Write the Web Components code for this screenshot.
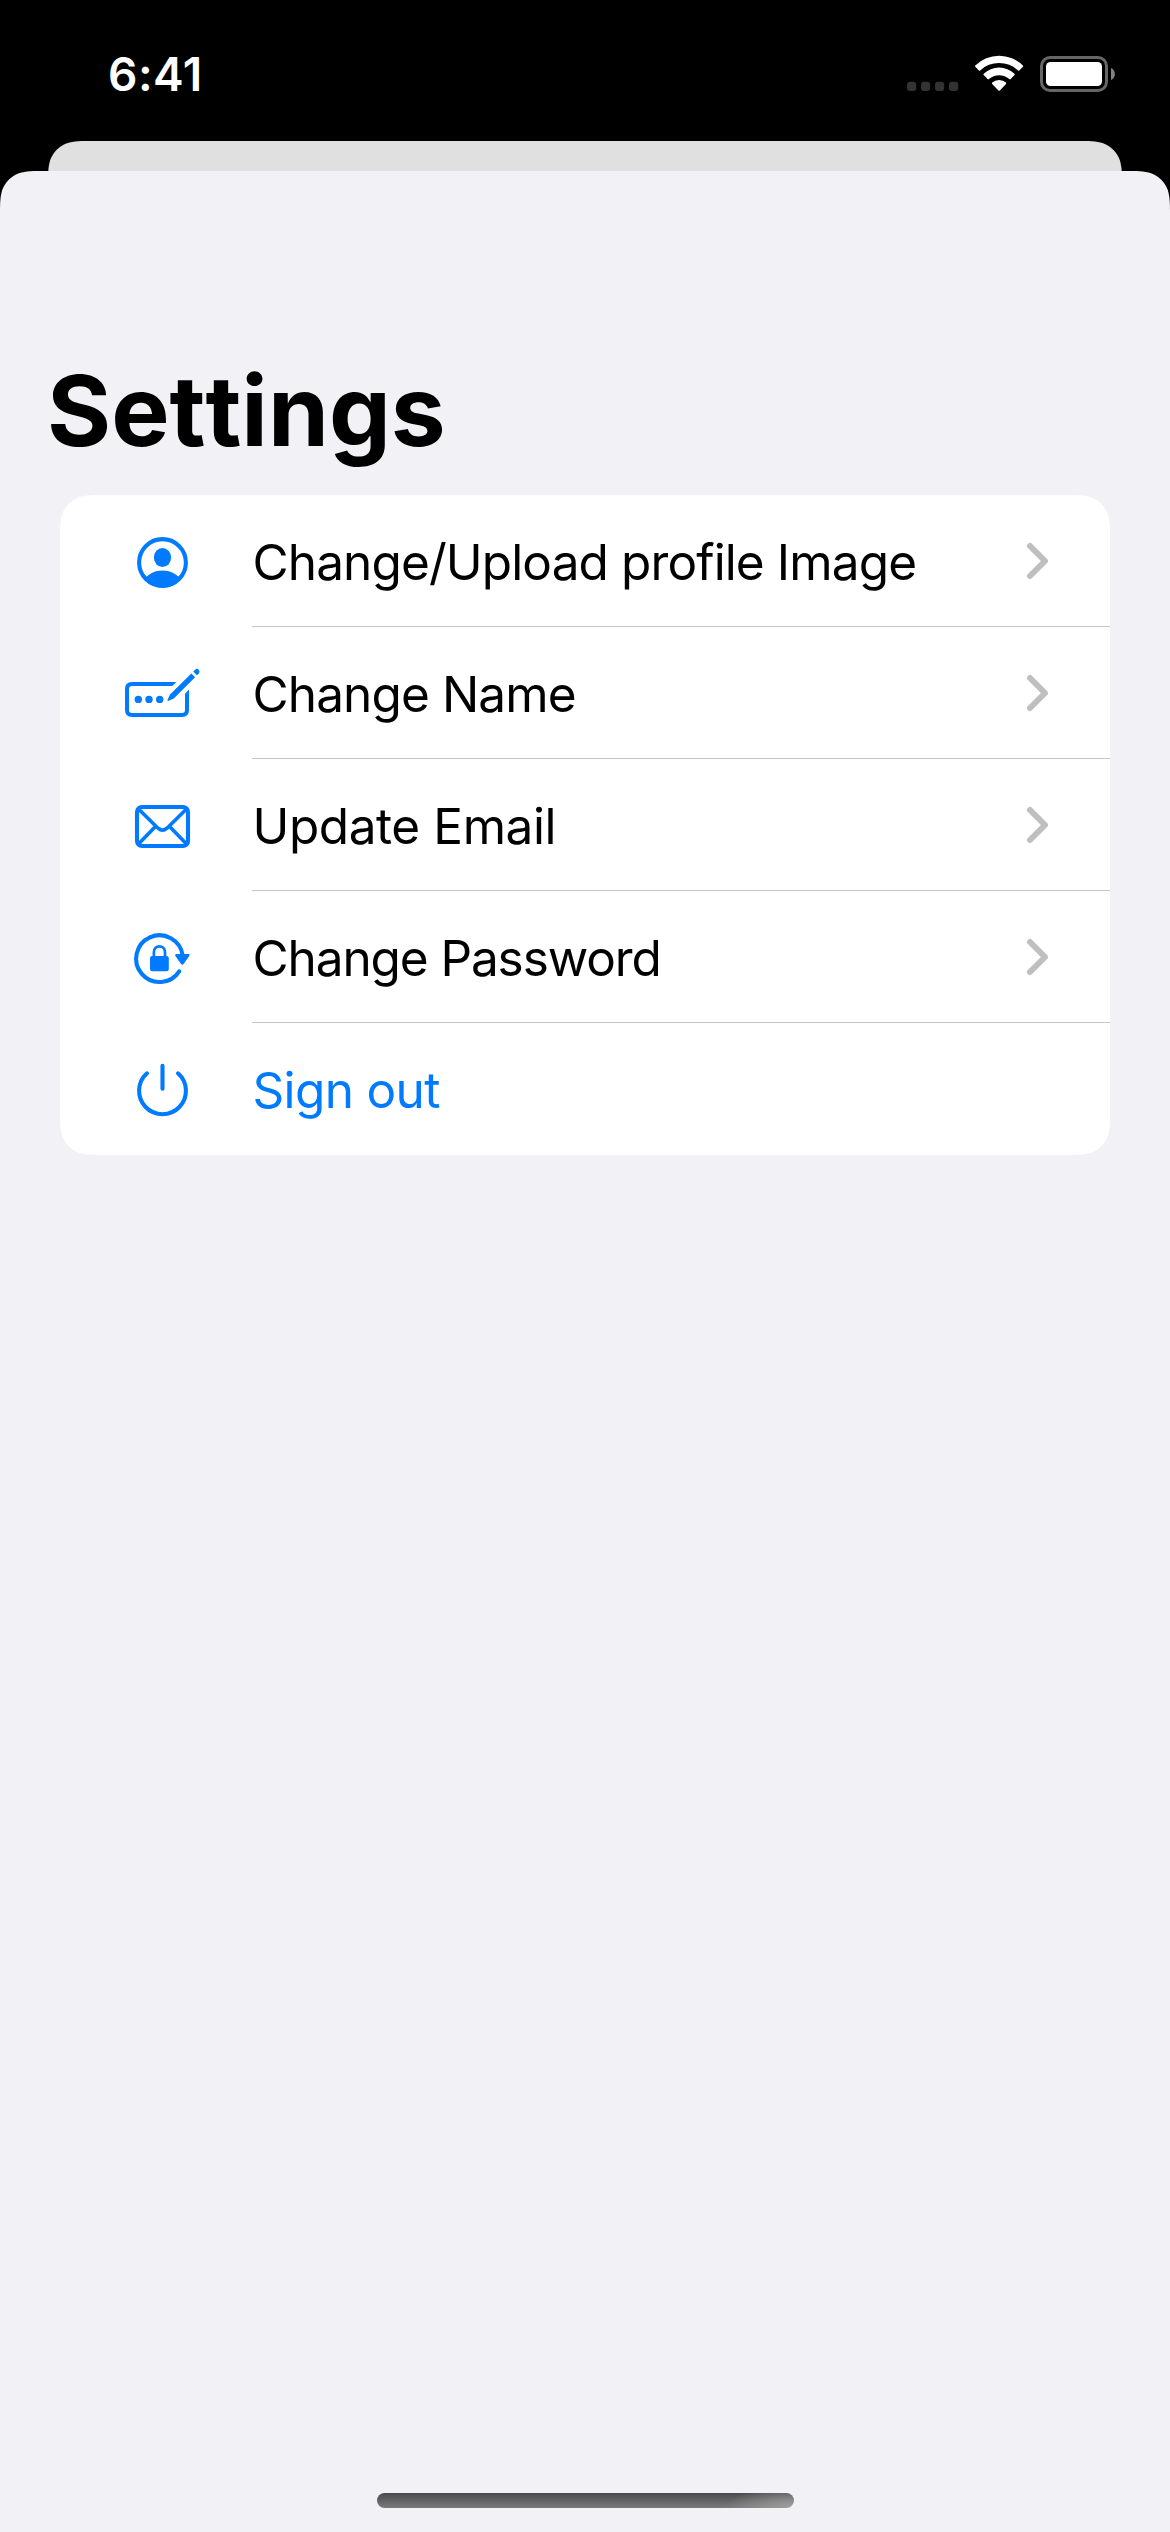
<!DOCTYPE html>
<html lang="en">
<head>
<meta charset="utf-8">
<title>Settings</title>
<style>
html,body{margin:0;padding:0;background:#000}
body{width:1170px;height:2532px;overflow:hidden;font-family:Inter,"Liberation Sans",sans-serif}
</style>
</head>
<body>
<settings-screen></settings-screen>
<script>
const define=(name,html)=>customElements.define(name,class extends HTMLElement{
  constructor(){super();this.attachShadow({mode:'open'}).innerHTML=html;}
});

define('status-bar',`<style>
:host{display:flex;justify-content:space-between;align-items:flex-start;height:141px;box-sizing:border-box;padding:45px 54px 0 108px;color:#fff}
.time{font-weight:600;font-size:46px;line-height:58px;letter-spacing:.5px}
svg{display:block;height:60px;width:216px}
</style>
<span class="time"><slot></slot></span>
<svg viewBox="900 45 216 60" fill="#fff">
<g fill="#333"><rect x="907" y="81.8" width="9.2" height="9.2" rx="3"/><rect x="921" y="81.8" width="9.2" height="9.2" rx="3"/><rect x="935" y="81.8" width="9.2" height="9.2" rx="3"/><rect x="949" y="81.8" width="9.2" height="9.2" rx="3"/></g>
<path d="M975.3 65.4A34 34 0 0 1 1022.9 65.4Q1023.5 66 1022.9 66.7L1019.3 70.4Q1018.7 71 1018 70.4A27.6 27.6 0 0 0 980.2 70.4Q979.5 71 978.9 70.4L975.3 66.7Q974.7 66 975.3 65.4Z"/>
<path d="M983.7 73.8A22 22 0 0 1 1014.5 73.8Q1015.1 74.4 1014.5 75.1L1010.7 79Q1010 79.7 1009.3 79.1A15.4 15.4 0 0 0 988.9 79.1Q988.2 79.7 987.5 79L983.7 75.1Q983.1 74.4 983.7 73.8Z"/>
<path d="M992.2 82.5A10.4 10.4 0 0 1 1006 82.5Q1006.6 83.2 1006 83.9L999.8 90.4Q999.1 91.2 998.4 90.4L992.2 83.9Q991.6 83.2 992.2 82.5Z"/>
<rect x="1041.5" y="57.5" width="65" height="33" rx="8.5" fill="none" stroke="#666" stroke-width="3"/>
<rect x="1046" y="62" width="56" height="24" rx="4.5"/>
<path d="M1111 68A6.6 6.6 0 0 1 1111 80Z" fill="#808080"/>
</svg>`);

const corner='M0 3000V45.9C0 32.7 0 26.1 2.2 18.9C5.1 11.2 11.2 5.1 18.9 2.2C26.1 0 32.7 0 45.9 0';
define('modal-sheet',`<style>
:host{display:flex;flex-direction:column;height:2391px}
.back{height:30px;margin:0 48px;background:#e0e0e0;clip-path:path('${corner}H1028.1C1041.3 0 1047.9 0 1055.1 2.2C1062.8 5.1 1068.9 11.2 1071.8 18.9C1074 26.1 1074 32.7 1074 45.9V3000Z')}
.front{flex:1;box-sizing:border-box;background:#f2f1f6;display:flex;flex-direction:column;padding-bottom:24px;clip-path:path('${corner}H1124.1C1137.3 0 1143.9 0 1151.1 2.2C1158.8 5.1 1164.9 11.2 1167.8 18.9C1170 26.1 1170 32.7 1170 45.9V3000Z')}
</style><div class="back"></div><div class="front"><slot></slot></div>`);

define('large-title',`<style>
:host{display:block;padding:180px 0 0 47px;height:144px;font-weight:700;font-size:98px;line-height:120px;color:#000;font-kerning:none}
</style><slot></slot>`);

define('settings-card',`<style>
:host{display:flex;flex-direction:column;width:1050px;margin-left:60px;height:660px;background:#fff;clip-path:path('M0 45.9C0 32.7 0 26.1 2.2 18.9C5.1 11.2 11.2 5.1 18.9 2.2C26.1 0 32.7 0 45.9 0H1004.1C1017.3 0 1023.9 0 1031.1 2.2C1038.8 5.1 1044.9 11.2 1047.8 18.9C1050 26.1 1050 32.7 1050 45.9V614.1C1050 627.3 1050 633.9 1047.8 641.1C1044.9 648.8 1038.8 654.9 1031.1 657.8C1023.9 660 1017.3 660 1004.1 660H45.9C32.7 660 26.1 660 18.9 657.8C11.2 654.9 5.1 648.8 2.2 641.1C0 633.9 0 627.3 0 614.1Z')}
</style><slot></slot>`);

define('settings-row',`<style>
:host{display:flex;height:132px;color:#000}
:host([accent]){color:#007aff}
.icon{width:192px;box-sizing:border-box;padding:26px 0 0 62px}
.body{flex:1;box-sizing:border-box;display:flex;justify-content:space-between;align-items:flex-start;padding-right:56px;border-bottom:1px solid #c4c4c6}
:host([accent]) .body{border-color:transparent}
.label{margin:37px 0 0 .5px;font-size:49.5px;line-height:60px;letter-spacing:var(--track,-.88px);white-space:nowrap}
svg{display:block;margin-top:44px}
:host([accent]) svg{display:none}
</style>
<div class="icon"><slot name="icon"></slot></div>
<div class="body"><span class="label"><slot></slot></span>
<svg width="30" height="44" viewBox="0 0 30 44" fill="none" stroke="#bfbfbf" stroke-width="6" stroke-linecap="round" stroke-linejoin="round"><path d="M6 7L21 22L6 37"/></svg></div>`);

const icons={
profile:`<circle cx="40.5" cy="41.5" r="23.4"/><g fill="#007aff" stroke="none"><ellipse cx="40.5" cy="36.5" rx="8.6" ry="9.6"/><path d="M22 58.5C27 52.5 33 49.6 40.5 49.6S54 52.5 59 58.5A25.4 25.4 0 0 1 22 58.5Z"/></g>`,
rename:`<path stroke-width="4" stroke-linecap="butt" d="M50 31H10Q5 31 5 36V57Q5 62 10 62H60Q65 62 65 57V40.6"/><g fill="#007aff" stroke="none"><path d="M49.8 29H54.4L50.2 33H49.8ZM63 40.8V40.6L67 36.6V40.8Z"/><circle cx="16.3" cy="46.4" r="3.7"/><circle cx="27" cy="46.4" r="3.7"/><circle cx="37.7" cy="46.4" r="3.7"/><path d="M46 47.9Q45.2 47.6 45.6 46.7L48 41.6L69.3 20.4L73.1 24.3L51.8 45.4Z"/><path d="M71.3 18.7L73.1 16.7Q74.9 15 76.7 16.7Q78.5 18.6 76.8 20.5L74.9 22.3Z"/></g>`,
mail:`<rect x="15" y="22" width="51" height="39" rx="5"/><path stroke-width="3.6" d="M16.5 24L36 43.2Q40.5 47.2 45 43.2L64.5 24M32.7 42.3L16.5 59M48.3 42.3L64.5 59"/>`,
password:`<path d="M60.7 38.5A23.4 23.4 0 1 0 57.2 54.3"/><path d="M31.9 40V35.3C31.9 27.3 43 27.3 43 35.3V40" stroke-width="2.7"/><g fill="#007aff" stroke="none"><rect x="28" y="39" width="18.8" height="15.2" rx="2.2"/><path d="M54.3 37H66.4Q68.4 37.2 67.2 39L61.6 47.1Q60.3 48.6 59 47.1L53.4 39Q52.4 37.2 54.3 37Z"/></g>`,
power:`<path d="M25 24.3A23.4 23.4 0 1 0 56 24.3M40.5 16.7V39.7"/>`
};
customElements.define('row-icon',class extends HTMLElement{
  constructor(){super();this.attachShadow({mode:'open'});}
  connectedCallback(){this.shadowRoot.innerHTML=`<style>:host{display:block;width:80px;height:80px}svg{display:block;overflow:visible}</style><svg width="80" height="80" viewBox="0 0 80 80" fill="none" stroke="#007aff" stroke-width="4.1" stroke-linecap="round" stroke-linejoin="round">${icons[this.getAttribute('name')]}</svg>`;}
});

define('home-indicator',`<style>
:host{display:block;margin:auto auto 0;width:417px;height:15px;border-radius:7.5px;background:radial-gradient(ellipse 70px 22px at 100% 100%,#a0a0a0,rgba(150,150,150,0)),linear-gradient(#4a4a4b,#7b7b7d)}
</style>`);

define('settings-screen',`<style>:host{display:block;width:1170px;height:2532px;background:#000}</style>
<status-bar>6:41</status-bar>
<modal-sheet>
<large-title>Settings</large-title>
<settings-card>
<settings-row><row-icon slot="icon" name="profile"></row-icon>Change/Upload profile Image</settings-row>
<settings-row><row-icon slot="icon" name="rename"></row-icon>Change Name</settings-row>
<settings-row style="--track:-.42px"><row-icon slot="icon" name="mail"></row-icon>Update Email</settings-row>
<settings-row style="--track:-1.1px"><row-icon slot="icon" name="password"></row-icon>Change Password</settings-row>
<settings-row accent style="--track:-.65px"><row-icon slot="icon" name="power"></row-icon>Sign out</settings-row>
</settings-card>
<home-indicator></home-indicator>
</modal-sheet>`);
</script>
</body>
</html>
